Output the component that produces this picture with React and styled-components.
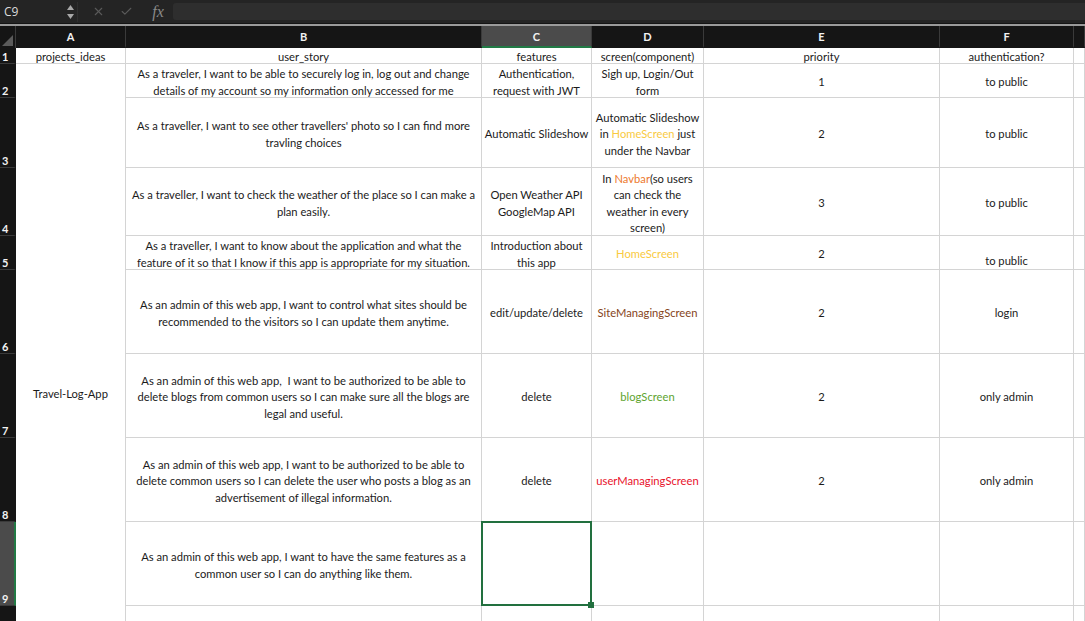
import React from 'react';
import styled, { createGlobalStyle } from 'styled-components';
import { X, Check } from 'lucide-react';

const GlobalStyle = createGlobalStyle`
  html, body {
    margin: 0;
    padding: 0;
    background: #ffffff;
    overflow: hidden;
  }
  * {
    box-sizing: border-box;
  }
`;

const COLS = ['A', 'B', 'C', 'D', 'E', 'F', ''];
const ROW_HEIGHTS = [16, 34, 70, 68, 34, 84, 84, 84, 84, 116];

const Y = '#f9ca3f';
const ORANGE = '#ed7a2e';
const BROWN = '#86441a';
const GREEN = '#5ea42f';
const RED = '#e8122b';

const Page = styled.div`
  width: 1085px;
  height: 621px;
  overflow: hidden;
  display: flex;
  flex-direction: column;
  font-family: Lato, 'Liberation Sans', sans-serif;
`;

const Toolbar = styled.div`
  height: 23px;
  flex-shrink: 0;
  background: #242424;
  display: flex;
  align-items: center;
  padding-left: 4px;
`;

const NameBox = styled.div`
  width: 60px;
  color: #dcdcdc;
  font-size: 12px;
  font-family: 'Open Sans', sans-serif;
`;

const Stepper = styled.div`
  width: 13px;
  display: flex;
  align-items: center;
  justify-content: center;
  svg {
    display: block;
  }
`;

const ToolSep = styled.div`
  width: 1px;
  height: 20px;
  background: #2f2f2f;
  margin-right: 6px;
`;

const ToolIcon = styled.div`
  width: 28px;
  display: flex;
  justify-content: center;
  align-items: center;
`;

const Fx = styled.div`
  width: 28px;
  margin-left: 4px;
  color: #8a8a8a;
  font-family: 'Liberation Serif', serif;
  font-style: italic;
  font-size: 16px;
  text-align: center;
  line-height: 1;
`;

const FormulaInput = styled.div`
  flex: 1;
  height: 17px;
  margin-left: 1px;
  background: #2e2e2e;
  border-radius: 3px 0 0 3px;
`;

const Rule = styled.div`
  height: 3px;
  flex-shrink: 0;
  border-top: 1px solid #141414;
  background: #9a9a9a;
`;

const Sheet = styled.div`
  flex: 1;
  display: grid;
  grid-template-columns: 16px 110px 356px 110px 112px 236px 134px 1fr;
  grid-template-rows: 22px ${ROW_HEIGHTS.map((h) => `${h}px`).join(' ')};
  background: #ffffff;
`;

const Corner = styled.div`
  background: #151515;
  border-right: 1px solid #3a3a3a;
  position: relative;
  &::after {
    content: '';
    position: absolute;
    right: 2px;
    bottom: 2px;
    width: 0;
    height: 0;
    border-left: 11px solid transparent;
    border-bottom: 11px solid #5b5b5b;
  }
`;

const ColHead = styled.div`
  background: ${(p) => (p.$active ? '#4b4b4b' : '#151515')};
  border-right: 1px solid #3a3a3a;
  border-bottom: 2px solid ${(p) => (p.$active ? '#217a45' : '#151515')};
  color: #f2f2f2;
  font-size: 11px;
  font-weight: 700;
  display: flex;
  align-items: center;
  justify-content: center;
  padding-top: 1px;
`;

const RowHead = styled.div`
  background: ${(p) => (p.$active ? '#4b4b4b' : '#151515')};
  border-bottom: 1px solid #3a3a3a;
  border-right: 2px solid ${(p) => (p.$active ? '#217a45' : '#151515')};
  color: #f2f2f2;
  font-size: 11px;
  font-weight: 700;
  display: flex;
  align-items: ${(p) => (p.$first ? 'center' : 'flex-end')};
  padding: ${(p) => (p.$first ? '2px 0 0 2px' : '0 0 0 2px')};
`;

const Cell = styled.div`
  position: relative;
  border-right: 1px solid #d4d4d4;
  border-bottom: 1px solid #d4d4d4;
  color: #1b1b1b;
  font-size: 11.2px;
  line-height: 16.5px;
  white-space: nowrap;
  text-align: center;
  display: flex;
  align-items: ${(p) => (p.$bottom ? 'flex-end' : 'center')};
  justify-content: center;
  padding-top: 4px;
`;

const Text = styled.span`
  display: block;
`;

const Merged = styled(Cell)`
  grid-column: 2;
  grid-row: 3 / span 10;
`;

const Tint = styled.span`
  color: ${(p) => p.$c};
`;

const Selection = styled.span`
  position: absolute;
  top: -1px;
  left: -1px;
  right: -1px;
  bottom: -1px;
  border: 2px solid #22703f;
  z-index: 2;
  pointer-events: none;
`;

const Handle = styled.span`
  position: absolute;
  right: -4px;
  bottom: -4px;
  width: 6px;
  height: 6px;
  background: #22703f;
  border: 1px solid #ffffff;
  border-width: 0 0 0 0;
`;

const rows = [
  {
    A: 'projects_ideas',
    B: 'user_story',
    C: 'features',
    D: 'screen(component)',
    E: 'priority',
    F: 'authentication?',
  },
  {
    B: (
      <>
        As a traveler, I want to be able to securely log in, log out and change
        <br />
        details of my account so my information only accessed for me
      </>
    ),
    C: (
      <>
        Authentication,
        <br />
        request with JWT
      </>
    ),
    D: (
      <>
        Sigh up, Login/Out
        <br />
        form
      </>
    ),
    E: '1',
    F: 'to public',
  },
  {
    B: (
      <>
        As a traveller, I want to see other travellers' photo so I can find more
        <br />
        travling choices
      </>
    ),
    C: 'Automatic Slideshow',
    D: (
      <>
        Automatic Slideshow
        <br />
        in <Tint $c={Y}>HomeScreen</Tint> just
        <br />
        under the Navbar
      </>
    ),
    E: '2',
    F: 'to public',
  },
  {
    B: (
      <>
        As a traveller, I want to check the weather of the place so I can make a
        <br />
        plan easily.
      </>
    ),
    C: (
      <>
        Open Weather API
        <br />
        GoogleMap API
      </>
    ),
    D: (
      <>
        In <Tint $c={ORANGE}>Navbar</Tint>(so users
        <br />
        can check the
        <br />
        weather in every
        <br />
        screen)
      </>
    ),
    E: '3',
    F: 'to public',
  },
  {
    B: (
      <>
        As a traveller, I want to know about the application and what the
        <br />
        feature of it so that I know if this app is appropriate for my situation.
      </>
    ),
    C: (
      <>
        Introduction about
        <br />
        this app
      </>
    ),
    D: <Tint $c={Y}>HomeScreen</Tint>,
    E: '2',
    F: 'to public',
    bottomF: true,
  },
  {
    B: (
      <>
        As an admin of this web app, I want to control what sites should be
        <br />
        recommended to the visitors so I can update them anytime.
      </>
    ),
    C: 'edit/update/delete',
    D: <Tint $c={BROWN}>SiteManagingScreen</Tint>,
    E: '2',
    F: 'login',
  },
  {
    B: (
      <>
        As an admin of this web app,&nbsp; I want to be authorized to be able to
        <br />
        delete blogs from common users so I can make sure all the blogs are
        <br />
        legal and useful.
      </>
    ),
    C: 'delete',
    D: <Tint $c={GREEN}>blogScreen</Tint>,
    E: '2',
    F: 'only admin',
  },
  {
    B: (
      <>
        As an admin of this web app, I want to be authorized to be able to
        <br />
        delete common users so I can delete the user who posts a blog as an
        <br />
        advertisement of illegal information.
      </>
    ),
    C: 'delete',
    D: <Tint $c={RED}>userManagingScreen</Tint>,
    E: '2',
    F: 'only admin',
  },
  {
    B: (
      <>
        As an admin of this web app, I want to have the same features as a
        <br />
        common user so I can do anything like them.
      </>
    ),
  },
  {},
];

const App = () => {
  return (
    <>
      <GlobalStyle />
      <Page>
        <Toolbar>
          <NameBox>C9</NameBox>
          <Stepper>
            <svg width="9" height="16" viewBox="0 0 9 16">
              <path d="M4.5 1 L8 6 L1 6 Z" fill="#a8a8a8" />
              <path d="M1 10 L8 10 L4.5 15 Z" fill="#a8a8a8" />
            </svg>
          </Stepper>
          <ToolSep />
          <ToolIcon>
            <X size={13} strokeWidth={2} color="#5a5a5a" />
          </ToolIcon>
          <ToolIcon>
            <Check size={13} strokeWidth={2} color="#5a5a5a" />
          </ToolIcon>
          <Fx>fx</Fx>
          <FormulaInput />
        </Toolbar>
        <Rule />
        <Sheet>
          <Corner />
          {COLS.map((c) => (
            <ColHead key={c || 'g'} $active={c === 'C'}>
              {c}
            </ColHead>
          ))}

          <Merged>
            <Text>Travel-Log-App</Text>
          </Merged>

          {rows.map((r, i) => {
            const n = i + 1;
            return (
              <React.Fragment key={n}>
                <RowHead $active={n === 9} $first={n === 1}>
                  {n < 10 ? n : ''}
                </RowHead>
                {n === 1 && (
                  <Cell>
                    <Text>{r.A}</Text>
                  </Cell>
                )}
                <Cell>
                  <Text>{r.B}</Text>
                </Cell>
                <Cell>
                  <Text>{r.C}</Text>
                  {n === 9 && (
                    <Selection>
                      <Handle />
                    </Selection>
                  )}
                </Cell>
                <Cell>
                  <Text>{r.D}</Text>
                </Cell>
                <Cell>
                  <Text>{r.E}</Text>
                </Cell>
                <Cell $bottom={r.bottomF}>
                  <Text>{r.F}</Text>
                </Cell>
                <Cell />
              </React.Fragment>
            );
          })}
        </Sheet>
      </Page>
    </>
  );
};

export default App;
